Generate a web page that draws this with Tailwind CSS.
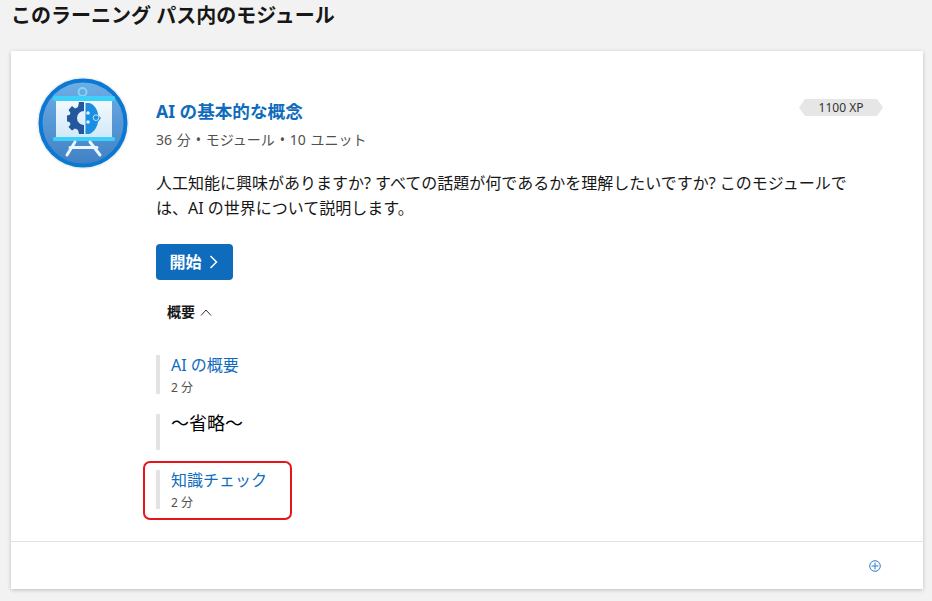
<!doctype html>
<html lang="ja">
<head>
  <meta charset="utf-8">
  <meta name="viewport" content="width=device-width, initial-scale=1">
  <title>このラーニング パス内のモジュール</title>
  <script src="https://cdn.jsdelivr.net/npm/@tailwindcss/browser@4"></script>
</head>
<body class="h-[601px] w-[932px] overflow-hidden bg-[#f2f2f2] font-['Noto_Sans','Noto_Sans_CJK_JP',sans-serif] text-[#171717]">
  <h2 class="h-[51px] pl-[11px] pt-[1px] text-[20px] leading-[30px] font-bold">このラーニング パス内のモジュール</h2>

  <main class="relative ml-[11px] h-[538px] w-[912px] bg-white shadow-[0_1px_4px_rgba(0,0,0,0.22)]">
    <div class="flex h-[490px] pl-[26px] pt-[26px]">
      <svg class="h-[92px] w-[92px] shrink-0" viewBox="0 0 92 92">
        <defs>
          <linearGradient id="bg" x1="0" y1="0" x2="0" y2="1">
            <stop offset="0" stop-color="#6fafe6"/>
            <stop offset="1" stop-color="#3f80c4"/>
          </linearGradient>
          <linearGradient id="screen" x1="0" y1="0" x2="0" y2="1">
            <stop offset="0" stop-color="#f2f9fe"/>
            <stop offset="1" stop-color="#d2e9f9"/>
          </linearGradient>
        </defs>
        <circle cx="46" cy="46" r="46" fill="#f0f0f0"/>
        <circle cx="46" cy="46" r="42.5" fill="url(#bg)" stroke="#0b78d4" stroke-width="4"/>
        <circle cx="45.5" cy="15" r="4" fill="none" stroke="#7fd6f7" stroke-width="2"/>
        <rect x="19" y="23" width="56" height="37" fill="url(#screen)"/>
        <rect x="16" y="19" width="62" height="5" rx="1.5" fill="#3dd0fb"/>
        <rect x="16" y="60" width="62" height="4" rx="1.5" fill="#3dd0fb"/>
        <path d="M38 65 L30 78 M53 65 L63 78 M33 70.5 H60" stroke="#eaf5fc" stroke-width="3" stroke-linecap="round" fill="none"/>
        <path d="M47 25 L42 25 L41 30 L38 31.5 L35 29 L31.5 33 L33.5 36 L32.5 38 L30 38.5 L30 44.5 L32.5 45 L33.5 47.5 L31.5 50 L35 53.5 L38 51.5 L41 53 L42 57 L47 57 L47 48 A7 7 0 0 1 47 34 Z" fill="#23589f"/>
        <path d="M48.5 26 H52 C57 27 61 33 61 38 L64 41 L61 45 C60 51 56 56 52 57 H48.5 Z" fill="#1a8ee0"/>
        <circle cx="51" cy="36" r="1.8" fill="#dff0fb"/>
        <circle cx="51" cy="45" r="1.8" fill="#dff0fb"/>
        <circle cx="59" cy="40.7" r="2.8" fill="none" stroke="#bfe6fa" stroke-width="1"/>
      </svg>

      <div class="ml-[27px] flex-1">
        <div class="flex items-start justify-between pr-[40px]">
          <div>
            <a class="mt-[21px] block text-[17.6px] leading-[26px] font-bold text-[#0f6cbd]">AI の基本的な概念</a>
            <p class="mt-[4px] text-[14px] leading-[24px] text-[#505050] [word-spacing:1.2px]">36 分 • モジュール • 10 ユニット</p>
          </div>
          <div class="mt-[22px] flex h-[17px] w-[84px] items-center justify-center bg-[#e6e6e6] text-[12px] text-[#333] [clip-path:polygon(7%_0,93%_0,100%_50%,93%_100%,7%_100%,0_50%)]">1100 XP</div>
        </div>
        <p class="mt-[19px] w-[700px] text-[16px] leading-[25px]">人工知能に興味がありますか? すべての話題が何であるかを理解したいですか? このモジュールでは、AI の世界について説明します。</p>
        <button class="mt-[23px] flex h-[36px] w-[77px] items-center justify-center gap-[7px] rounded-[4px] bg-[#0f6cbd] pr-[2px] text-[16px] font-bold text-white">
          開始
          <svg class="h-[14px] w-[9px]" viewBox="0 0 9 14" fill="none" stroke="currentColor" stroke-width="1.5"><path d="M1.5 1 L7.5 7 L1.5 13"/></svg>
        </button>
        <div class="mt-[22px] flex items-center gap-[5px] pl-[11px] text-[14px] leading-[20px] font-bold">
          概要
          <svg class="h-[7px] w-[12px]" viewBox="0 0 12 7" fill="none" stroke="#333" stroke-width="1"><path d="M1 6.5 L6 1 L11 6.5"/></svg>
        </div>
        <ul class="mt-[33px] flex flex-col gap-[20px]">
          <li class="h-[39px] border-l-[4px] border-[#e3e3e3] pl-[11px]">
            <a class="block text-[16px] leading-[20px] text-[#0f6cbd]">AI の概要</a>
            <p class="mt-[5px] text-[12px] leading-[16px] text-[#505050]">2 分</p>
          </li>
          <li class="h-[36px] border-l-[4px] border-[#e3e3e3] pl-[11px]">
            <p class="text-[18px] leading-[18px] text-black">～省略～</p>
          </li>
          <li class="h-[39px] border-l-[4px] border-[#e3e3e3] pl-[11px]">
            <a class="block text-[16px] leading-[20px] text-[#0f6cbd]">知識チェック</a>
            <p class="mt-[5px] text-[12px] leading-[16px] text-[#505050]">2 分</p>
          </li>
        </ul>
      </div>
    </div>
    <div class="flex h-[48px] items-center justify-end border-t border-[#e3e3e3] pr-[42px]">
      <svg class="h-[12px] w-[12px]" viewBox="0 0 12 12" fill="none" stroke="#2f7fc9" stroke-width="1"><circle cx="6" cy="6" r="5.3"/><path d="M2.5 6 H9.5 M6 2.5 V9.5"/></svg>
    </div>
    <div class="absolute left-[132px] top-[410px] h-[59px] w-[149px] rounded-[7px] border-2 border-[#e8141c]"></div>
  </main>
</body>
</html>
